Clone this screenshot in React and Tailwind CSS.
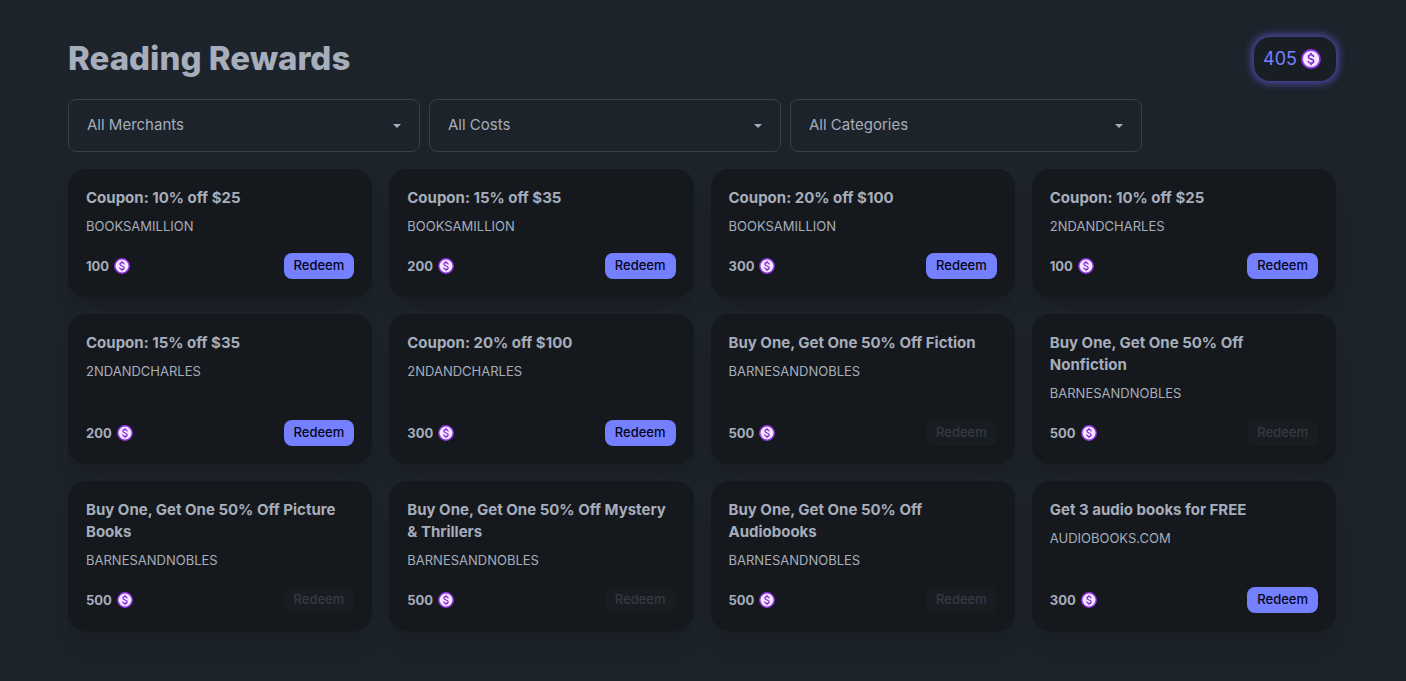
const coupons = [
  { title: "Coupon: 10% off $25", merchant: "BOOKSAMILLION", cost: 100 },
  { title: "Coupon: 15% off $35", merchant: "BOOKSAMILLION", cost: 200 },
  { title: "Coupon: 20% off $100", merchant: "BOOKSAMILLION", cost: 300 },
  { title: "Coupon: 10% off $25", merchant: "2NDANDCHARLES", cost: 100 },
  { title: "Coupon: 15% off $35", merchant: "2NDANDCHARLES", cost: 200 },
  { title: "Coupon: 20% off $100", merchant: "2NDANDCHARLES", cost: 300 },
  { title: "Buy One, Get One 50% Off Fiction", merchant: "BARNESANDNOBLES", cost: 500 },
  { title: "Buy One, Get One 50% Off Nonfiction", merchant: "BARNESANDNOBLES", cost: 500 },
  { title: "Buy One, Get One 50% Off Picture Books", merchant: "BARNESANDNOBLES", cost: 500 },
  { title: "Buy One, Get One 50% Off Mystery & Thrillers", merchant: "BARNESANDNOBLES", cost: 500 },
  { title: "Buy One, Get One 50% Off Audiobooks", merchant: "BARNESANDNOBLES", cost: 500 },
  { title: "Get 3 audio books for FREE", merchant: "AUDIOBOOKS.COM", cost: 300 },
];

const balance = 405;

function Coin({ className }) {
  return (
    <svg viewBox="0 0 20 20" className={className} aria-hidden="true">
      <circle cx="10" cy="10" r="9" fill="#f3e8ff" stroke="#9333ea" strokeWidth="1.8" />
      <path
        d="M12.6 7.5C12.4 6.4 11.3 5.8 10 5.8C8.5 5.8 7.4 6.6 7.4 7.9C7.4 10.6 12.7 9.3 12.7 12.1C12.7 13.4 11.5 14.2 10 14.2C8.6 14.2 7.5 13.5 7.2 12.4M10 4.3V5.8M10 14.2V15.7"
        fill="none"
        stroke="#7e22ce"
        strokeWidth="1.5"
        strokeLinecap="round"
      />
    </svg>
  );
}

function Filter({ label, name }) {
  return (
    <div className="relative w-full max-w-[352px]">
      <select
        aria-label={name}
        className="block h-[53px] w-full appearance-none rounded-lg border border-[#383f47] bg-[#1d232a] pr-11 pl-[18px] text-[15px] text-[#a6adbb]"
      >
        <option>{label}</option>
      </select>
      <svg
        viewBox="0 0 8 4"
        className="pointer-events-none absolute top-[25px] right-[19px] h-1 w-2"
        aria-hidden="true"
      >
        <path d="M0 0H8L4 4Z" fill="#a6adbb" />
      </svg>
    </div>
  );
}

function RewardCard({ title, merchant, cost }) {
  return (
    <article className="flex flex-col rounded-[18px] bg-[#15191e] p-[18px] shadow-xl">
      <h2 className="text-[15px] leading-[22px] font-bold">{title}</h2>
      <p className="mt-[7px] text-[13px] leading-5">{merchant}</p>
      <div className="mt-auto flex items-center justify-between pt-[17px]">
        <span className="flex items-center gap-[5px] text-[13px] leading-5 font-bold">
          {cost}
          <Coin className="size-4" />
        </span>
        <button
          type="button"
          disabled={cost > balance}
          className="h-[26px] rounded-lg bg-[#7480ff] px-2.5 text-[13px] font-medium text-[#050617] disabled:bg-[#191d22] disabled:text-[#343a42]"
        >
          Redeem
        </button>
      </div>
    </article>
  );
}

export default function App() {
  return (
    <main className="min-h-screen bg-[#1d232a] pt-[37px] pr-[70px] pb-[50px] pl-[68px] font-[Inter,sans-serif] text-[#a6adbb]">
      <header className="flex items-start justify-between">
        <h1 className="text-[33px] leading-[42px] font-extrabold">Reading Rewards</h1>
        <div className="flex h-11 items-center gap-1 rounded-2xl bg-[#191e24] pr-[15px] pl-[9px] text-lg text-[#7480ff] shadow-[0_0_9px_2px_#5150b8]">
          {balance}
          <Coin className="size-5" />
        </div>
      </header>
      <div className="mt-[18px] flex gap-[9px]">
        <Filter name="Merchant" label="All Merchants" />
        <Filter name="Cost" label="All Costs" />
        <Filter name="Category" label="All Categories" />
      </div>
      <section className="mt-[17px] grid grid-cols-4 gap-[17px]">
        {coupons.map((coupon) => (
          <RewardCard key={coupon.merchant + coupon.title} {...coupon} />
        ))}
      </section>
    </main>
  );
}
